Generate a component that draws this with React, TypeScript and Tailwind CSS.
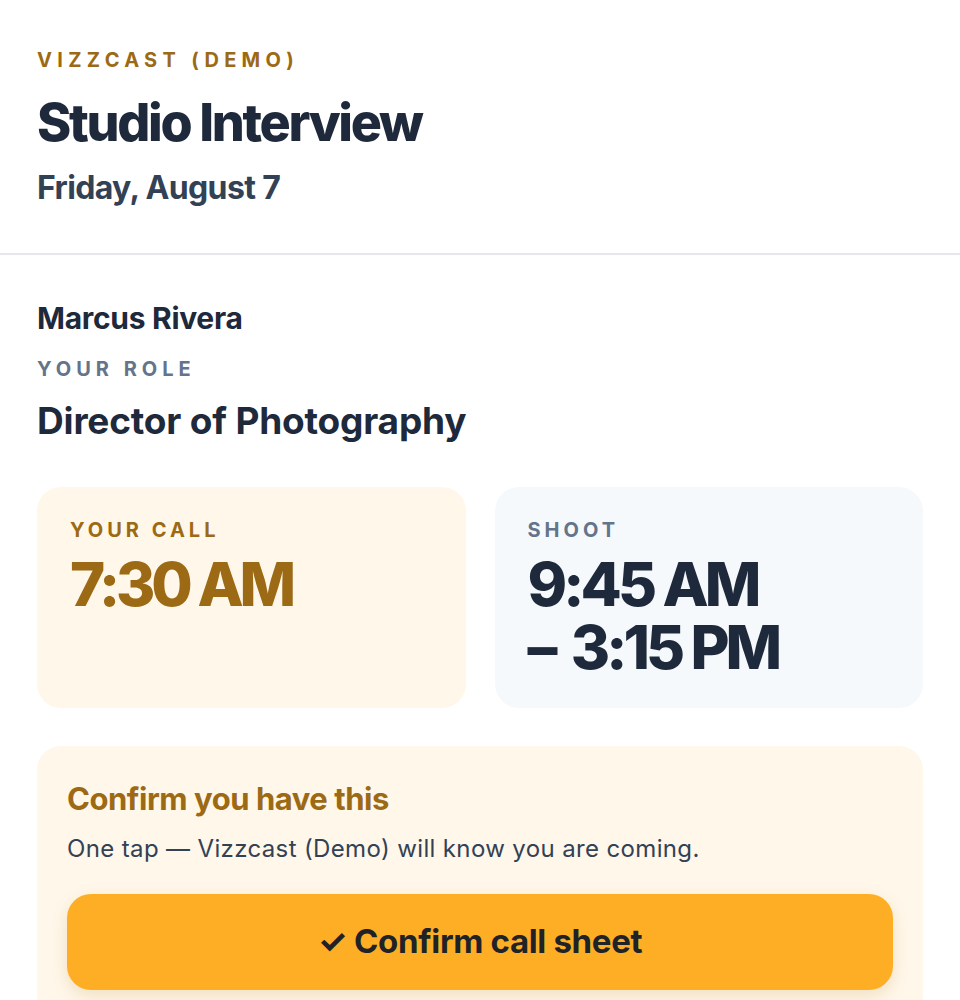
export default function App() {
  return (
    <div className="min-h-screen bg-white font-['Inter','Liberation_Sans',sans-serif] text-[#1e293b]">
      <header className="border-b-2 border-[#e5e7eb] px-[37px] pt-[46px] pb-[45px]">
        <p className="text-[20px] leading-[28px] font-bold uppercase tracking-[0.265em] text-[#9c6a14]">
          Vizzcast (Demo)
        </p>
        <h1 className="mt-[20px] text-[52px] leading-[57px] font-extrabold tracking-[-0.045em]">
          Studio Interview
        </h1>
        <p className="mt-[17px] text-[32px] leading-[40px] font-bold tracking-[-0.02em] text-[#334155]">
          Friday, August 7
        </p>
      </header>

      <main className="px-[37px] pt-[45px]">
        <p className="text-[30px] leading-[36px] font-bold tracking-[-0.01em]">Marcus Rivera</p>
        <p className="mt-[19px] text-[20px] leading-[28px] font-bold uppercase tracking-[0.25em] text-[#64748b]">
          Your role
        </p>
        <p className="mt-[16px] text-[37px] leading-[44px] font-bold tracking-[-0.005em]">
          Director of Photography
        </p>

        <div className="mt-[44px] grid grid-cols-2 gap-[29px]">
          <div className="rounded-[24px] bg-[#fff7ea] px-[33px] pt-[29px] pb-[29px]">
            <p className="text-[20px] leading-[28px] font-bold uppercase tracking-[0.2em] text-[#9c6a14]">
              Your call
            </p>
            <p className="mt-[9px] text-[60px] leading-[63px] font-extrabold tracking-[-0.07em] text-[#9c6a14]">
              7:30 AM
            </p>
          </div>
          <div className="rounded-[24px] bg-[#f6f9fc] px-[33px] pt-[29px] pb-[29px]">
            <p className="text-[20px] leading-[28px] font-bold uppercase tracking-[0.2em] text-[#64748b]">
              Shoot
            </p>
            <p className="mt-[9px] text-[60px] leading-[63px] font-extrabold tracking-[-0.065em]">
              9:45 AM
              <br />
              <span className="tracking-normal">– </span>3:15 PM
            </p>
          </div>
        </div>

        <div className="mt-[38px] rounded-[24px] bg-[#fff7ea] px-[30px] pt-[35px] pb-[30px]">
          <h2 className="text-[31px] leading-[36px] font-bold tracking-[-0.015em] text-[#9c6a14]">
            Confirm you have this
          </h2>
          <p className="mt-[16px] text-[24px] leading-[32px] tracking-[0.015em] text-[#334155]">
            One tap — Vizzcast (Demo) will know you are coming.
          </p>
          <button className="mt-[29px] flex h-[96px] w-full items-center justify-center rounded-[24px] bg-[#fdae24] text-[33px] font-bold tracking-[-0.01em] text-[#1f2328] shadow-[0_6px_16px_rgba(180,120,20,0.18)]">
            ✓ Confirm call sheet
          </button>
        </div>
      </main>
    </div>
  );
}
